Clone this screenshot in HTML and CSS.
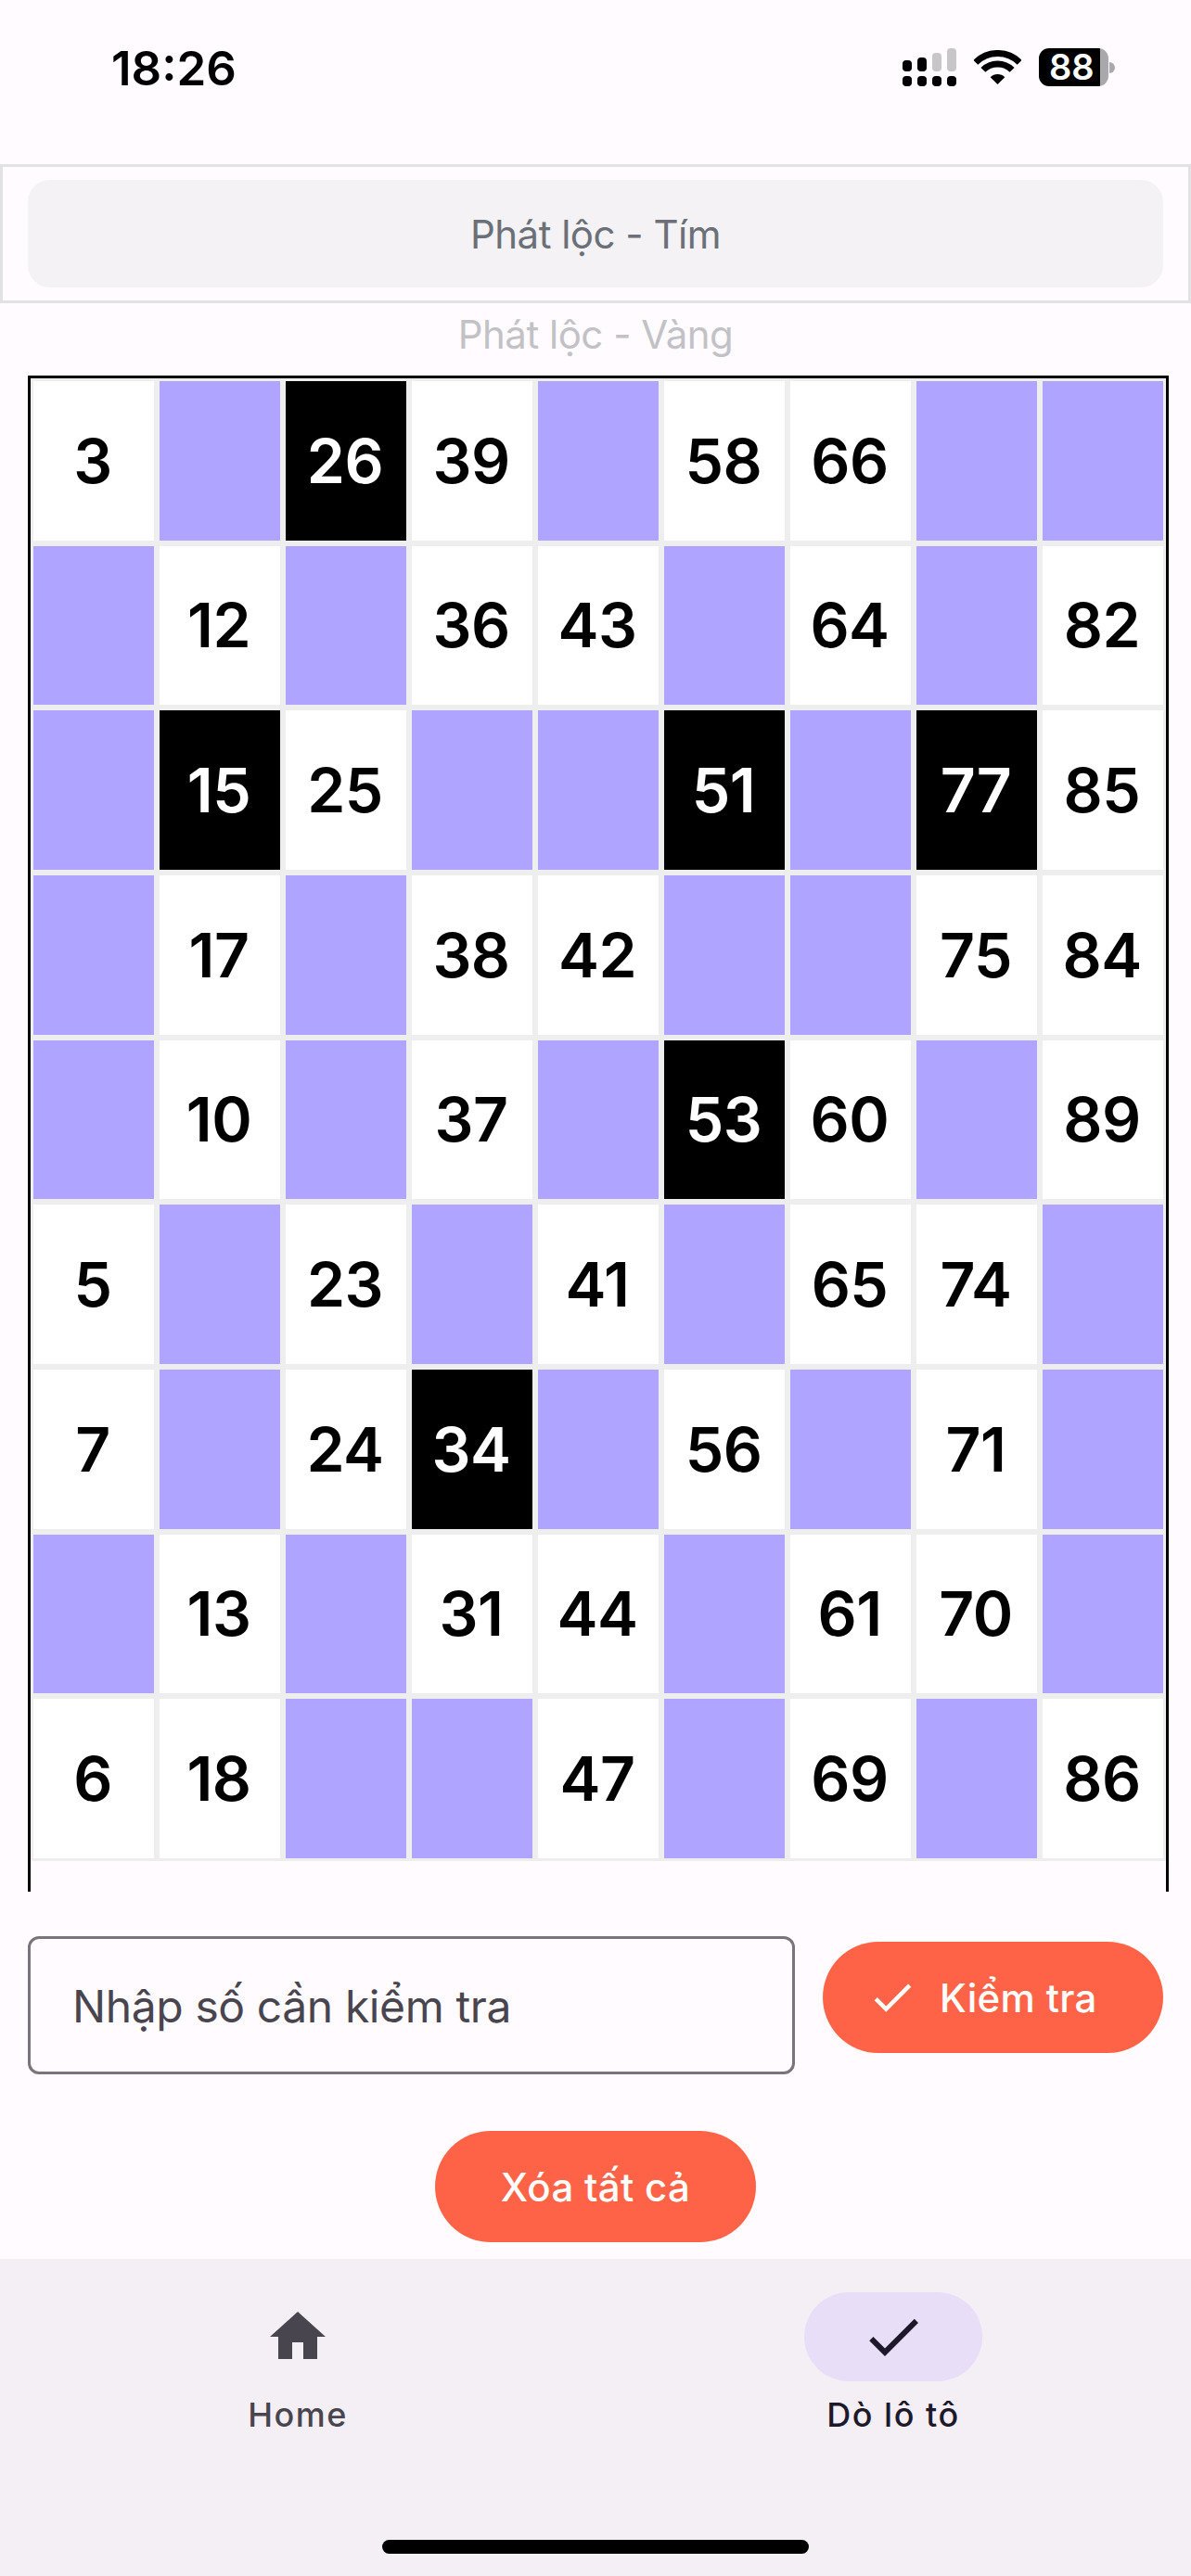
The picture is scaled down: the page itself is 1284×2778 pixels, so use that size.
FILE: index.html
```html
<!DOCTYPE html>
<html lang="vi">
<head>
<meta charset="utf-8">
<title>Dò lô tô</title>
<link rel="stylesheet" href="styles.css">
</head>
<body>
<div class="screen">
  <header class="status">
    <span class="time">18:26</span>
    <div class="status-icons">
      <svg class="signal" width="58" height="41" viewBox="0 0 58 41">
        <rect x="0" y="13" width="10" height="12" rx="4"/>
        <rect x="16" y="10" width="10" height="15" rx="4"/>
        <rect class="dim" x="32" y="5" width="10" height="20" rx="4"/>
        <rect class="dim" x="48" y="0" width="10" height="25" rx="4"/>
        <rect x="0" y="30" width="10" height="11" rx="4"/>
        <rect x="16" y="30" width="10" height="11" rx="4"/>
        <rect x="32" y="30" width="10" height="11" rx="4"/>
        <rect x="48" y="30" width="10" height="11" rx="4"/>
      </svg>
      <svg class="wifi" width="51" height="37" viewBox="0 0 51 37">
        <path class="arc" d="M1.8 13.3A33.5 33.5 0 0 1 49.2 13.3"/>
        <path class="arc" d="M9.9 21.4A22 22 0 0 1 41.1 21.4"/>
        <path d="M25.5 37L17.7 29.2A11 11 0 0 1 33.3 29.2Z"/>
      </svg>
      <div class="battery">
        <div class="battery-body"><span class="battery-level">88</span></div>
        <span class="battery-nub"></span>
      </div>
    </div>
  </header>

  <div class="picker">
    <div class="picker-item">Phát lộc - Tím</div>
  </div>
  <div class="picker-next">Phát lộc - Vàng</div>

  <div class="board-wrap">
    <div class="board">
      <div class="cell">3</div><div class="cell p"></div><div class="cell b">26</div><div class="cell">39</div><div class="cell p"></div><div class="cell">58</div><div class="cell">66</div><div class="cell p"></div><div class="cell p"></div>
      <div class="cell p"></div><div class="cell">12</div><div class="cell p"></div><div class="cell">36</div><div class="cell">43</div><div class="cell p"></div><div class="cell">64</div><div class="cell p"></div><div class="cell">82</div>
      <div class="cell p"></div><div class="cell b">15</div><div class="cell">25</div><div class="cell p"></div><div class="cell p"></div><div class="cell b">51</div><div class="cell p"></div><div class="cell b">77</div><div class="cell">85</div>
      <div class="cell p"></div><div class="cell">17</div><div class="cell p"></div><div class="cell">38</div><div class="cell">42</div><div class="cell p"></div><div class="cell p"></div><div class="cell">75</div><div class="cell">84</div>
      <div class="cell p"></div><div class="cell">10</div><div class="cell p"></div><div class="cell">37</div><div class="cell p"></div><div class="cell b">53</div><div class="cell">60</div><div class="cell p"></div><div class="cell">89</div>
      <div class="cell">5</div><div class="cell p"></div><div class="cell">23</div><div class="cell p"></div><div class="cell">41</div><div class="cell p"></div><div class="cell">65</div><div class="cell">74</div><div class="cell p"></div>
      <div class="cell">7</div><div class="cell p"></div><div class="cell">24</div><div class="cell b">34</div><div class="cell p"></div><div class="cell">56</div><div class="cell p"></div><div class="cell">71</div><div class="cell p"></div>
      <div class="cell p"></div><div class="cell">13</div><div class="cell p"></div><div class="cell">31</div><div class="cell">44</div><div class="cell p"></div><div class="cell">61</div><div class="cell">70</div><div class="cell p"></div>
      <div class="cell">6</div><div class="cell">18</div><div class="cell p"></div><div class="cell p"></div><div class="cell">47</div><div class="cell p"></div><div class="cell">69</div><div class="cell p"></div><div class="cell">86</div>
    </div>
  </div>

  <div class="check-row">
    <div class="field"><span class="placeholder">Nhập số cần kiểm tra</span></div>
    <button class="btn btn-check" type="button">
      <svg class="btn-icon" width="54" height="54" viewBox="0 0 24 24"><path d="M9 16.17L4.83 12l-1.42 1.41L9 19 21 7l-1.41-1.41z"/></svg>
      <span>Kiểm tra</span>
    </button>
  </div>

  <div class="clear-row">
    <button class="btn btn-clear" type="button">Xóa tất cả</button>
  </div>

  <nav class="nav">
    <div class="nav-items">
      <div class="nav-item">
        <div class="nav-pill">
          <svg class="icon-home" width="72" height="72" viewBox="0 0 24 24"><path d="M10 20v-6h4v6h5v-8h3L12 3 2 12h3v8z"/></svg>
        </div>
        <span class="nav-label">Home</span>
      </div>
      <div class="nav-item active">
        <div class="nav-pill">
          <svg class="icon-check" width="72" height="72" viewBox="0 0 24 24"><path d="M9 16.17L4.83 12l-1.42 1.41L9 19 21 7l-1.41-1.41z"/></svg>
        </div>
        <span class="nav-label">Dò lô tô</span>
      </div>
    </div>
    <div class="home-indicator"></div>
  </nav>
</div>
</body>
</html>
```
FILE: styles.css
```css
* { box-sizing: border-box; }
html, body { margin: 0; padding: 0; }
body {
  width: 1284px;
  height: 2778px;
  overflow: hidden;
  background: #fffbfe;
  font-family: Inter, "Noto Sans", sans-serif;
}
.screen { display: flex; flex-direction: column; height: 2778px; }

.status {
  height: 177px;
  flex: none;
  display: flex;
  justify-content: space-between;
  align-items: flex-start;
  padding: 52px 82px 0 120px;
}
.time { font-size: 51px; line-height: 44px; font-weight: 600; color: #000; letter-spacing: 0; }
.status-icons { display: flex; align-items: flex-start; }
.signal { fill: #000; display: block; }
.signal .dim { fill: #c9c6ca; }
.wifi { display: block; margin: 2px 0 0 19px; fill: #000; }
.wifi .arc { fill: none; stroke: #000; stroke-width: 7; }
.battery { display: flex; align-items: center; margin-left: 19px; }
.battery-body {
  width: 75px;
  height: 41px;
  border-radius: 11px;
  background: linear-gradient(to right, #000 66px, #aaa8ac 66px);
  display: flex;
  align-items: center;
  padding-left: 11px;
}
.battery-level { font-size: 38px; line-height: 41px; font-weight: 600; color: #fff; letter-spacing: 0; }
.battery-nub { width: 6px; height: 12px; border-radius: 0 6px 6px 0; background: #aaa8ac; margin-left: 1px; }

.picker {
  flex: none;
  height: 150px;
  border: 3px solid #e2e2e5;
  padding: 14px 27px;
}
.picker-item {
  height: 116px;
  border-radius: 24px;
  background: #f4f2f5;
  display: flex;
  align-items: center;
  justify-content: center;
  font-size: 42px;
  letter-spacing: -0.5px;
  color: #6b7078;
}
.picker-next {
  flex: none;
  height: 78px;
  padding-top: 10px;
  line-height: 48px;
  text-align: center;
  font-size: 42px;
  letter-spacing: -0.5px;
  color: #c2c2c6;
}

.board-wrap {
  flex: none;
  height: 1635px;
  margin: 0 24px 0 30px;
  border: 3px solid #000;
  border-bottom: 0;
  overflow: hidden;
}
.board {
  display: grid;
  grid-template-columns: repeat(9, 136px);
  grid-template-rows: repeat(9, 177.667px);
}
.cell {
  border: 3px solid #eeeeee;
  background: #fff;
  color: #000;
  display: flex;
  align-items: center;
  justify-content: center;
  padding-right: 2px;
  font-size: 66px;
  font-weight: 600;
  letter-spacing: -0.5px;
}
.cell.p { background: #afa4ff; }
.cell.b { background: #000; color: #fff; }

.check-row {
  flex: none;
  display: flex;
  align-items: flex-start;
  padding: 48px 30px 0;
  gap: 30px;
}
.field {
  width: 827px;
  height: 149px;
  border: 3px solid #79747e;
  border-radius: 12px;
  display: flex;
  align-items: center;
  padding: 2px 0 0 45px;
}
.placeholder { font-size: 48px; letter-spacing: -0.4px; color: #49454f; }

.btn {
  height: 120px;
  border: 0;
  border-radius: 60px;
  background: #ff6347;
  color: #fff;
  font-family: inherit;
  font-size: 42px;
  font-weight: 500;
  letter-spacing: 0.3px;
  display: flex;
  align-items: center;
}
.btn-check { width: 367px; padding: 0 0 0 48px; gap: 24px; margin-top: 6px; }
.btn-icon { fill: #fff; flex: none; }
.clear-row { flex: none; display: flex; justify-content: center; padding-top: 61px; }
.btn-clear { width: 346px; justify-content: center; padding: 0; }

.nav {
  flex: none;
  margin-top: 18px;
  height: 342px;
  background: #f3eff5;
  padding-top: 36px;
  display: flex;
  flex-direction: column;
}
.nav-items { display: grid; grid-template-columns: 1fr 1fr; }
.nav-item { display: flex; flex-direction: column; align-items: center; }
.nav-pill {
  width: 192px;
  height: 96px;
  border-radius: 48px;
  display: flex;
  align-items: center;
  justify-content: center;
}
.nav-item.active .nav-pill { background: #e8def8; }
.icon-home { fill: #49454f; }
.icon-check { fill: #1d192b; }
.nav-label {
  margin-top: 12px;
  font-size: 36px;
  line-height: 48px;
  font-weight: 500;
  letter-spacing: 1.5px;
  color: #49454f;
}
.nav-item.active .nav-label { color: #1d192b; }
.home-indicator {
  width: 460px;
  height: 15px;
  border-radius: 8px;
  background: #000;
  margin: 111px auto 0;
}
```
